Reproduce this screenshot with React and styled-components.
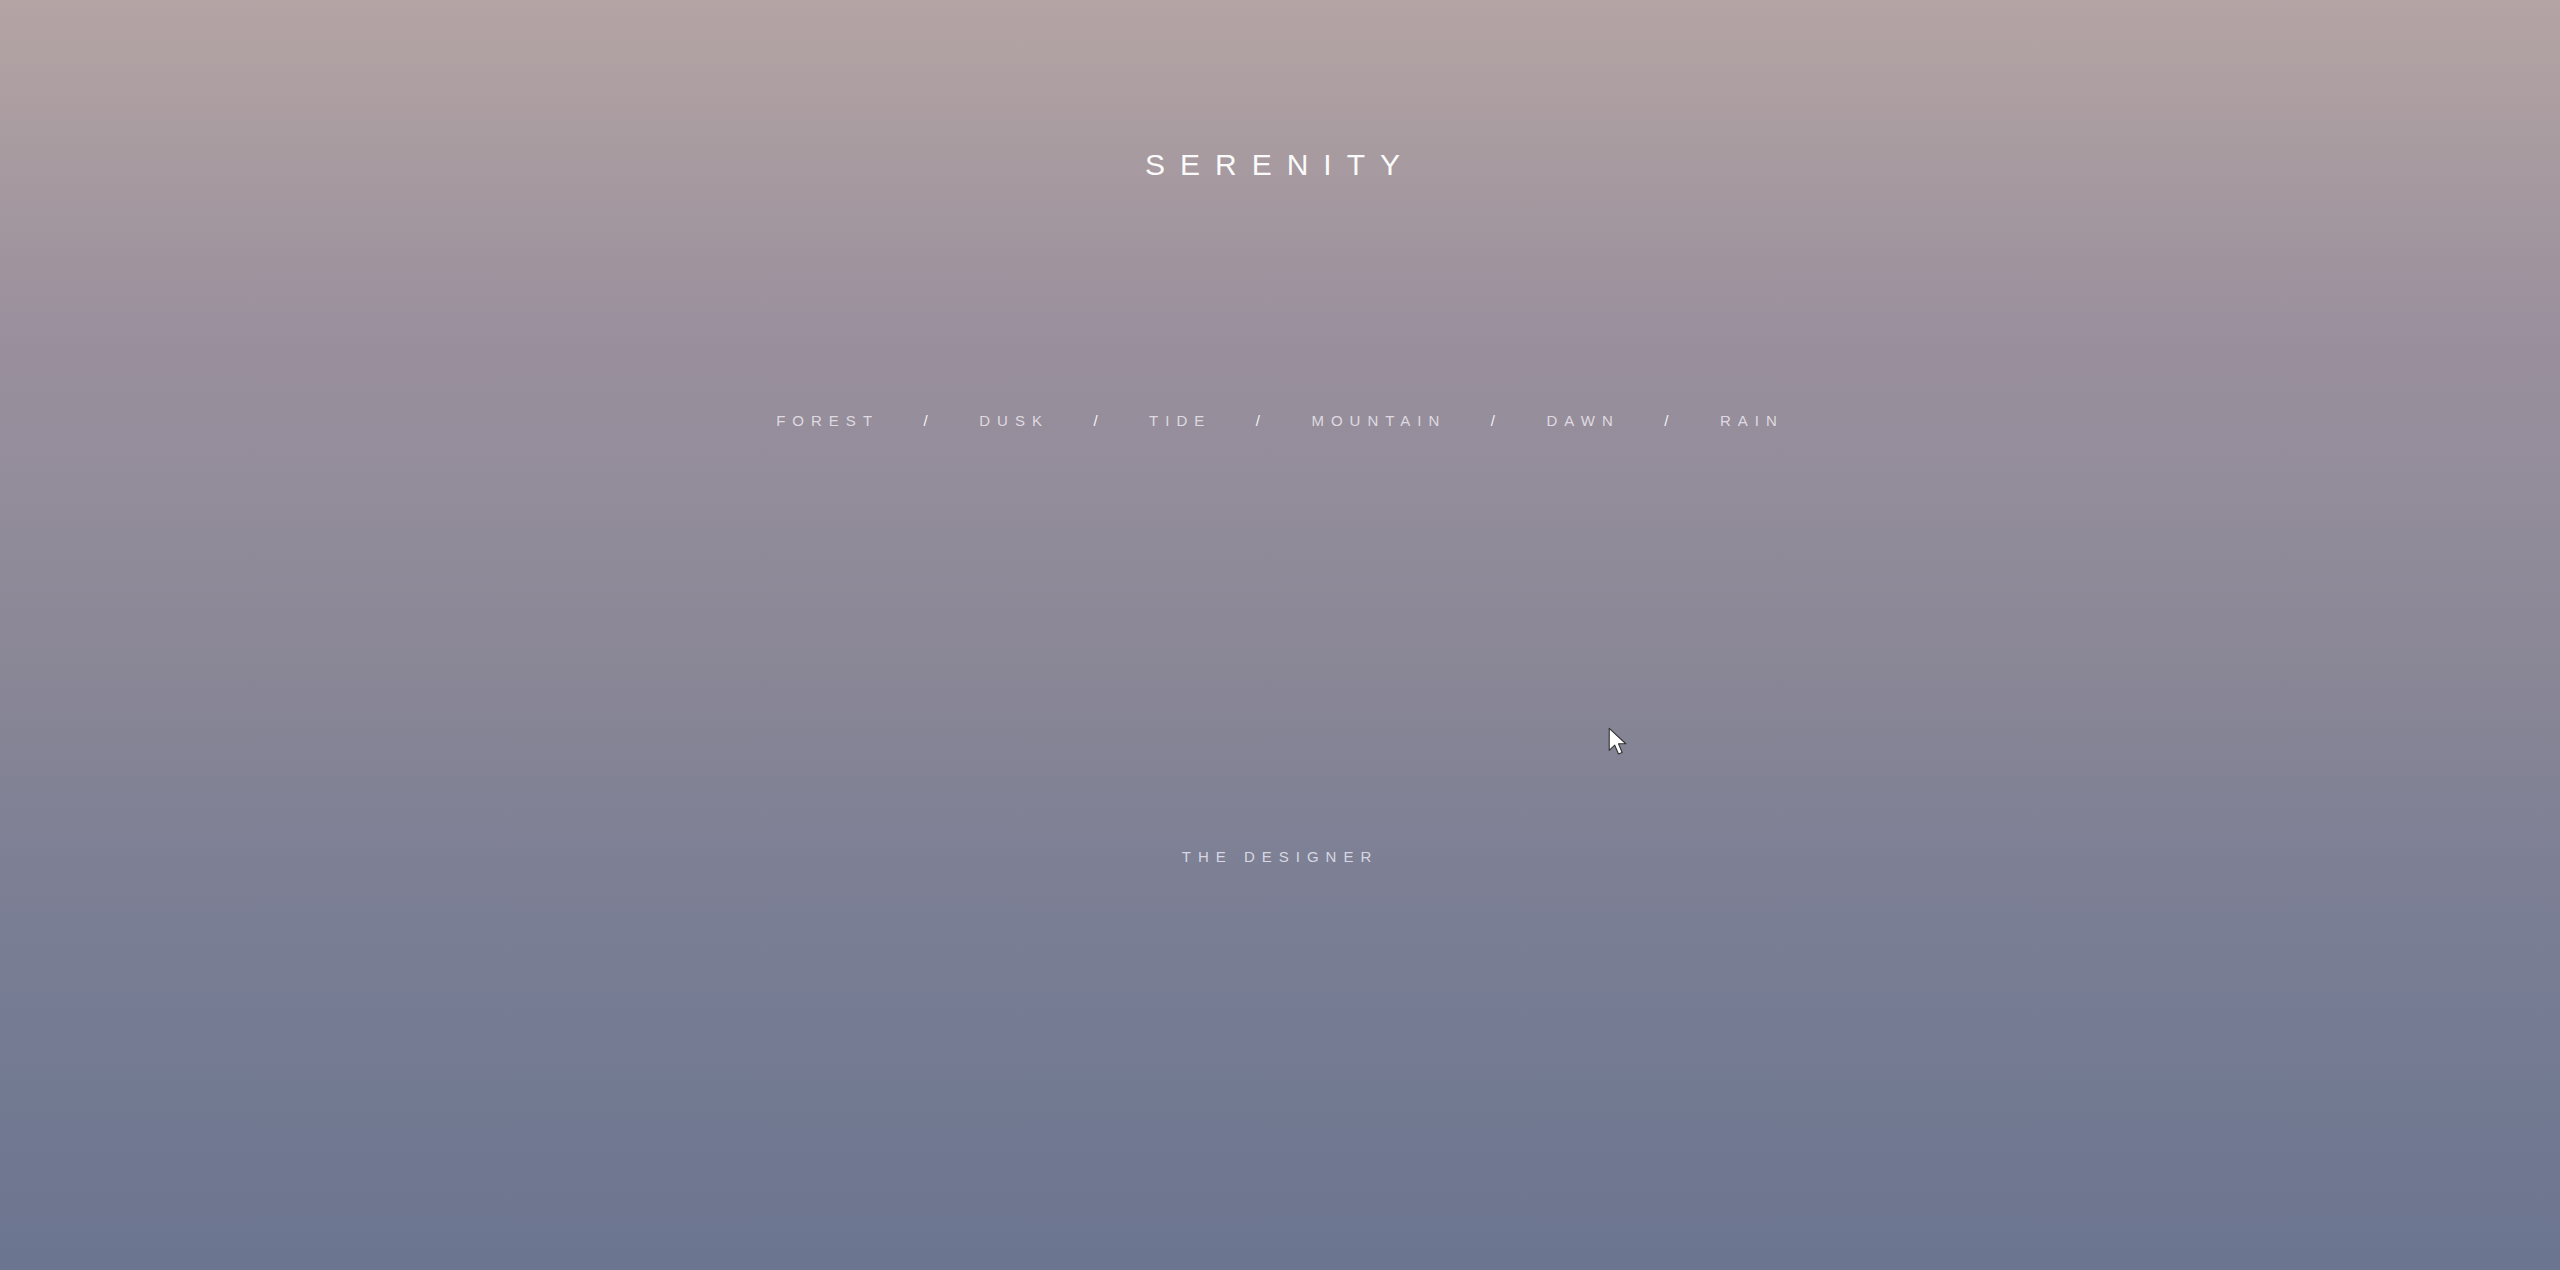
import React from "react";
import styled, { createGlobalStyle } from "styled-components";

const GlobalStyle = createGlobalStyle`
  html, body {
    margin: 0;
    padding: 0;
    height: 100%;
  }
  body {
    font-family: "Liberation Sans", Arial, sans-serif;
    overflow: hidden;
  }
`;

const Page = styled.main`
  position: relative;
  box-sizing: border-box;
  width: 100%;
  height: 100vh;
  padding-top: 150px;
  display: flex;
  flex-direction: column;
  align-items: center;
  background: linear-gradient(
    180deg,
    #b4a4a4 0%,
    #a89ba0 12%,
    #9b909d 25%,
    #928c9a 40%,
    #8a8796 52%,
    #7e8095 67%,
    #747b92 82%,
    #6c7590 100%
  );
  color: #fff;
`;

const Title = styled.h1`
  margin: 0;
  font-family: "Liberation Sans", Arial, sans-serif;
  font-weight: 400;
  font-size: 30px;
  line-height: 1;
  letter-spacing: 0.5em;
  color: #fbfafb;
`;

const Nav = styled.nav`
  margin-top: 233px;
  display: flex;
  align-items: center;
  gap: 44.5px;
  font-size: 15px;
  line-height: 1;
  letter-spacing: 7px;
`;

const NavItem = styled.a`
  color: rgba(240, 236, 242, 0.82);
  text-decoration: none;
  font-weight: 400;
`;

const Slash = styled.span`
  color: rgba(255, 255, 255, 0.92);
`;

const Signature = styled.p`
  margin: 421px 0 0;
  font-size: 15px;
  line-height: 1;
  letter-spacing: 7px;
  color: rgba(232, 232, 242, 0.85);
`;

const Cursor = styled.svg`
  position: absolute;
  left: 1608px;
  top: 727px;
  width: 22px;
  height: 32px;
  pointer-events: none;
`;

const items = ["FOREST", "DUSK", "TIDE", "MOUNTAIN", "DAWN", "RAIN"];

export default function App() {
  return (
    <>
      <GlobalStyle />
      <Page>
        <Title>SERENITY</Title>
        <Nav>
          {items.map((item, i) => (
            <React.Fragment key={item}>
              {i > 0 && <Slash>/</Slash>}
              <NavItem href="#">{item}</NavItem>
            </React.Fragment>
          ))}
        </Nav>
        <Signature>THE DESIGNER</Signature>
        <Cursor viewBox="0 0 18 26">
          <path
            d="M1 1 L1 19 L5.5 14.8 L8.6 22 L11.6 20.7 L8.6 13.6 L14.6 13.6 Z"
            fill="#ffffff"
            stroke="#333"
            strokeWidth="0.9"
            strokeLinejoin="round"
          />
        </Cursor>
      </Page>
    </>
  );
}
